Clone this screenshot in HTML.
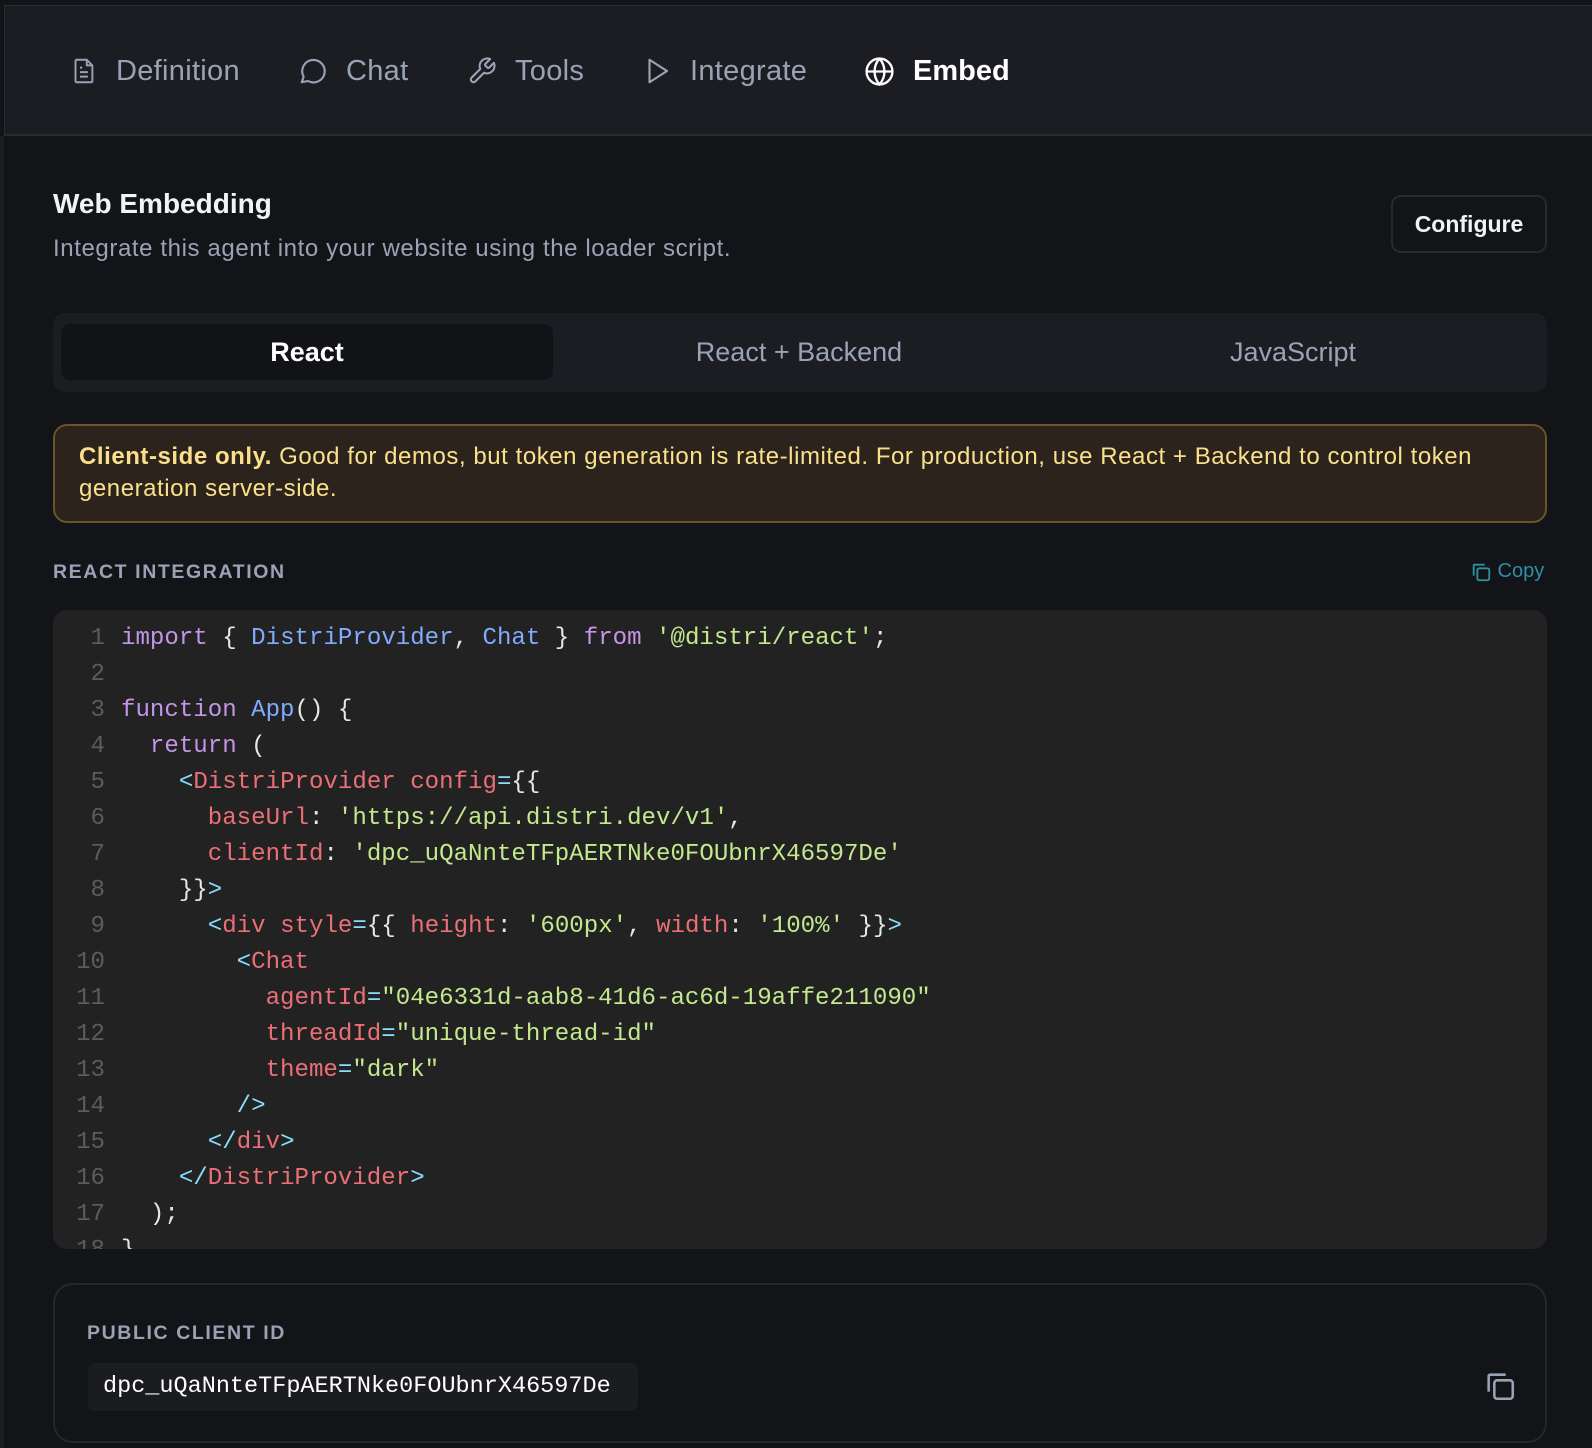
<!DOCTYPE html>
<html><head><meta charset="utf-8"><style>
*{box-sizing:border-box;margin:0;padding:0}
body{width:1592px;height:1448px;background:#131418;font-family:"Liberation Sans",sans-serif;overflow:hidden;position:relative;color:#fff}
.nav{position:absolute;left:4px;top:5px;width:1588px;height:131px;background:#1c1d22;border-top:1px solid #2a2b31;border-bottom:2px solid #2a2b31;border-left:1px solid #2a2b31}
.ni{position:absolute;top:45px;height:40px;display:flex;align-items:center;font-size:29px;color:#9aa3b5;font-weight:500;letter-spacing:0.3px}
.ni svg{margin-right:18px}
.ni.a{color:#fff;font-weight:700;letter-spacing:0}
.lb{position:absolute;left:0;top:136px;width:4px;height:1312px;background:#1c1d22}
h1{position:absolute;left:53px;top:188px;font-size:28px;font-weight:700;color:#f2f3f5}
.sub{position:absolute;left:53px;top:235px;font-size:24px;letter-spacing:0.6px;color:#9aa3b5}
.cfg{position:absolute;left:1391px;top:195px;width:156px;height:58px;border:2px solid #272930;border-radius:10px;display:flex;align-items:center;justify-content:center;font-size:23px;font-weight:700;color:#f2f3f5}
.tabs{position:absolute;left:53px;top:313px;width:1494px;height:79px;background:#1c1d22;border-radius:12px}
.tab{position:absolute;top:11px;height:56px;width:492px;display:flex;align-items:center;justify-content:center;font-size:27px;font-weight:500;color:#9aa3b5}
.tab.a{background:#121317;color:#fff;border-radius:9px;font-weight:700}
.warn{position:absolute;left:53px;top:424px;width:1494px;height:99px;background:#2b231c;border:2px solid #6b5428;border-radius:14px;padding:15px 24px;font-size:24px;letter-spacing:0.55px;line-height:32px;color:#fbe08c}
.lab{position:absolute;font-size:19.5px;font-weight:700;color:#9aa3b5;letter-spacing:1.6px}
.copy{position:absolute;left:1470px;top:560px;font-size:20px;color:#2f8fa3;display:flex;align-items:center}
.code{position:absolute;left:53px;top:610px;width:1494px;height:639px;background:#222222;border-radius:14px;overflow:hidden;padding-top:11px}
.ln{display:flex;height:36px;line-height:36px;font-family:"Liberation Mono",monospace;font-size:24.1px;white-space:pre;color:#e6e6e6}
.n{width:52px;text-align:right;color:#5c5c5c;margin-right:16px}
.k{color:#c594e6}.b{color:#82aaff}.r{color:#eb6f76}.s{color:#c3e88d}.c{color:#89ddff}
.card{position:absolute;left:53px;top:1283px;width:1494px;height:160px;border:2px solid #25272c;border-radius:20px}
.chip{position:absolute;left:33px;top:78px;width:550px;height:48px;background:#1b1c20;border-radius:8px;font-family:"Liberation Mono",monospace;font-size:23.5px;color:#fff;padding-left:15px;line-height:48px}
</style></head><body>
<div class="nav">
 <div class="ni" style="left:66px"><svg width="27" height="30" viewBox="0 0 24 24" fill="none" stroke="#9aa3b5" stroke-width="1.7" stroke-linejoin="round"><path d="M5 2h9l5 5v14a1 1 0 0 1-1 1H5a1 1 0 0 1-1-1V3a1 1 0 0 1 1-1z"/><path d="M14 2v5h5M8 13h7M8 17h7M8 9h2"/></svg>Definition</div>
 <div class="ni" style="left:293px"><svg width="30" height="30" viewBox="0 0 24 24" fill="none" stroke="#9aa3b5" stroke-width="1.7"><path d="M3 21l1.5-4.5A9 9 0 1 1 8 20z" stroke-linejoin="round"/></svg>Chat</div>
 <div class="ni" style="left:462px"><svg width="30" height="30" viewBox="0 0 24 24" fill="none" stroke="#9aa3b5" stroke-width="1.7" stroke-linejoin="round"><path d="M14.7 6.3a1 1 0 0 0 0 1.4l1.6 1.6a1 1 0 0 0 1.4 0l3.8-3.8a6 6 0 0 1-7.9 7.9l-6.9 6.9a2.1 2.1 0 0 1-3-3l6.9-6.9a6 6 0 0 1 7.9-7.9z"/></svg>Tools</div>
 <div class="ni" style="left:637px"><svg width="30" height="30" viewBox="0 0 24 24" fill="none" stroke="#9aa3b5" stroke-width="1.7" stroke-linejoin="round"><path d="M6 3l14 9-14 9z"/></svg>Integrate</div>
 <div class="ni a" style="left:859px"><svg width="31" height="31" viewBox="0 0 24 24" fill="none" stroke="#fff" stroke-width="1.8"><circle cx="12" cy="12" r="10"/><path d="M2 12h20M12 2a15 15 0 0 1 0 20a15 15 0 0 1 0-20"/></svg>Embed</div>
</div>
<div class="lb"></div>
<h1>Web Embedding</h1>
<div class="sub">Integrate this agent into your website using the loader script.</div>
<div class="cfg">Configure</div>
<div class="tabs">
 <div class="tab a" style="left:8px">React</div>
 <div class="tab" style="left:500px">React + Backend</div>
 <div class="tab" style="left:994px">JavaScript</div>
</div>
<div class="warn"><b>Client-side only.</b> Good for demos, but token generation is rate-limited. For production, use React + Backend to control token generation server-side.</div>
<div class="lab" style="left:53px;top:561px">REACT INTEGRATION</div>
<div class="copy"><svg width="22" height="22" viewBox="0 0 24 24" fill="none" stroke="#2f8fa3" stroke-width="2"><rect x="8" y="8" width="13" height="13" rx="2"/><path d="M4 16V5a1 1 0 0 1 1-1h11"/></svg>&nbsp;Copy</div>
<div class="code">
<div class="ln"><span class="n">1</span><span><span class="k">import</span> { <span class="b">DistriProvider</span>, <span class="b">Chat</span> } <span class="k">from</span> <span class="s">'@distri/react'</span>;</span></div>
<div class="ln"><span class="n">2</span></div>
<div class="ln"><span class="n">3</span><span><span class="k">function</span> <span class="b">App</span>() {</span></div>
<div class="ln"><span class="n">4</span><span>  <span class="k">return</span> (</span></div>
<div class="ln"><span class="n">5</span><span>    <span class="c">&lt;</span><span class="r">DistriProvider config</span><span class="c">=</span>{{</span></div>
<div class="ln"><span class="n">6</span><span>      <span class="r">baseUrl</span>: <span class="s">'https://api.distri.dev/v1'</span>,</span></div>
<div class="ln"><span class="n">7</span><span>      <span class="r">clientId</span>: <span class="s">'dpc_uQaNnteTFpAERTNke0FOUbnrX46597De'</span></span></div>
<div class="ln"><span class="n">8</span><span>    }}<span class="c">&gt;</span></span></div>
<div class="ln"><span class="n">9</span><span>      <span class="c">&lt;</span><span class="r">div style</span><span class="c">=</span>{{ <span class="r">height</span>: <span class="s">'600px'</span>, <span class="r">width</span>: <span class="s">'100%'</span> }}<span class="c">&gt;</span></span></div>
<div class="ln"><span class="n">10</span><span>        <span class="c">&lt;</span><span class="r">Chat</span></span></div>
<div class="ln"><span class="n">11</span><span>          <span class="r">agentId</span><span class="c">=</span><span class="s">"04e6331d-aab8-41d6-ac6d-19affe211090"</span></span></div>
<div class="ln"><span class="n">12</span><span>          <span class="r">threadId</span><span class="c">=</span><span class="s">"unique-thread-id"</span></span></div>
<div class="ln"><span class="n">13</span><span>          <span class="r">theme</span><span class="c">=</span><span class="s">"dark"</span></span></div>
<div class="ln"><span class="n">14</span><span>        <span class="c">/&gt;</span></span></div>
<div class="ln"><span class="n">15</span><span>      <span class="c">&lt;/</span><span class="r">div</span><span class="c">&gt;</span></span></div>
<div class="ln"><span class="n">16</span><span>    <span class="c">&lt;/</span><span class="r">DistriProvider</span><span class="c">&gt;</span></span></div>
<div class="ln"><span class="n">17</span><span>  );</span></div>
<div class="ln"><span class="n">18</span><span>}</span></div>
</div>
<div class="card">
 <div class="lab" style="left:32px;top:37px">PUBLIC CLIENT ID</div>
 <div class="chip">dpc_uQaNnteTFpAERTNke0FOUbnrX46597De</div>
 <svg style="position:absolute;left:1428px;top:84px" width="34" height="34" viewBox="0 0 24 24" fill="none" stroke="#9aa3b5" stroke-width="1.8"><rect x="8" y="8" width="13" height="13" rx="2"/><path d="M4 16V5a1 1 0 0 1 1-1h11"/></svg>
</div>
</body></html>
